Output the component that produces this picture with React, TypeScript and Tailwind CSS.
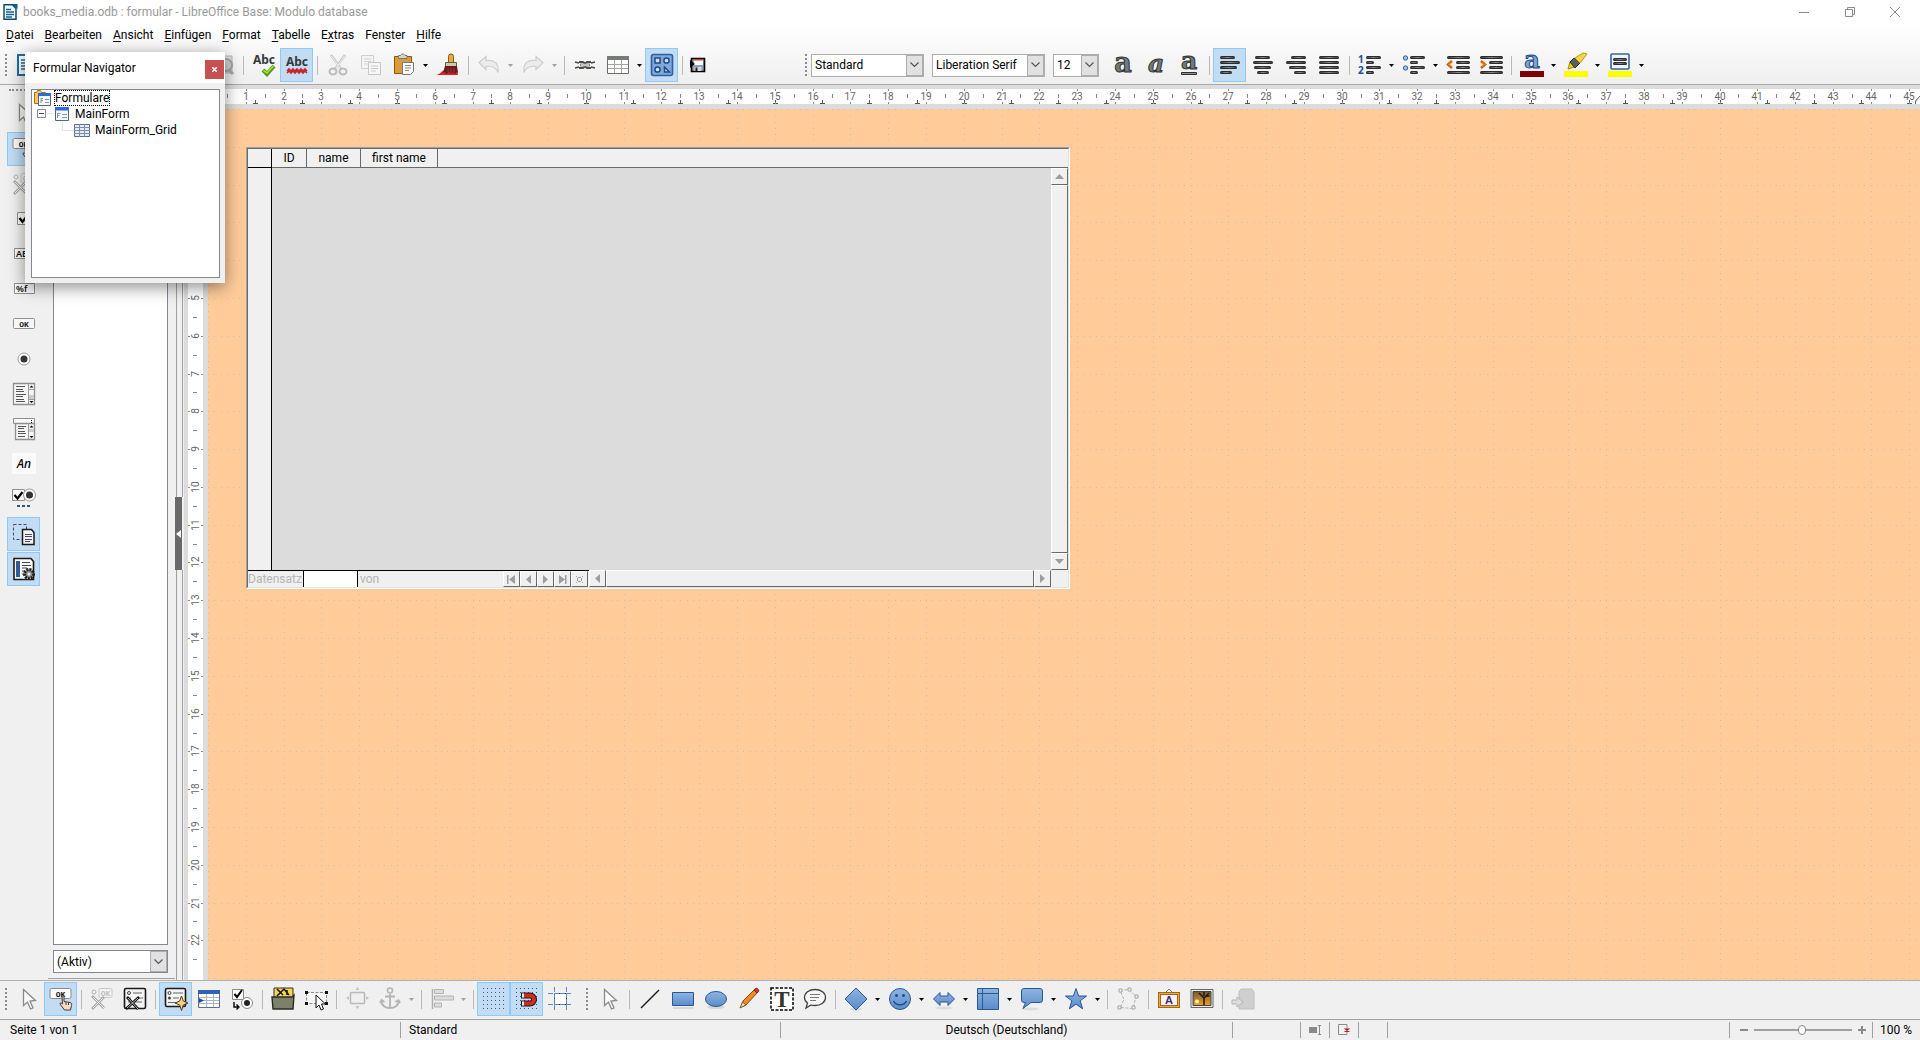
import React from "react";

const CM = 37.79;

type IconProps = { children: React.ReactNode };

const Svg: React.FC<IconProps> = ({ children }) => (
  <svg width="24" height="24" viewBox="0 0 24 24" fill="none" className="shrink-0 overflow-visible" aria-hidden="true">
    {children}
  </svg>
);

type ToolProps = {
  label: string;
  active?: boolean;
  menu?: boolean;
  dim?: boolean;
  children: React.ReactNode;
};

const Tool: React.FC<ToolProps> = ({ label, active, menu, dim, children }) => (
  <div className="flex shrink-0 items-center">
    <button
      type="button"
      aria-label={label}
      title={label}
      className={
        active
          ? "flex h-[34px] w-[33px] items-center justify-center border border-[#90c8f6] bg-[#c1dcf3]"
          : "flex h-[34px] w-[33px] items-center justify-center"
      }
    >
      {children}
    </button>
    {menu && (
      <button type="button" aria-label={label + " Menü"} className="flex h-[34px] w-[11px] items-center justify-center">
        <svg width="5" height="3" viewBox="0 0 5 3" aria-hidden="true">
          <path d="M0 0h5L2.5 3z" fill={dim ? "#a0a0a0" : "#000"} />
        </svg>
      </button>
    )}
  </div>
);

const Sep = () => (
  <div className="flex h-[34px] w-2 shrink-0 items-center justify-center">
    <div className="h-[19px] w-px bg-[#b9b9b9]" />
  </div>
);

const Grip = () => (
  <div className="flex h-[34px] w-[11px] shrink-0 items-center justify-center">
    <div className="h-[22px] border-l-2 border-dotted border-[#8c8c8c]" />
  </div>
);

/* ---------- icons ---------- */

const Gradients = () => (
  <svg width="0" height="0" className="absolute" aria-hidden="true">
    <defs>
      <linearGradient id="blue" x1="0" y1="0" x2="0" y2="1">
        <stop offset="0" stopColor="#8fb4e0" />
        <stop offset="1" stopColor="#5a8ccb" />
      </linearGradient>
      <linearGradient id="bar" x1="0" y1="0" x2="1" y2="0">
        <stop offset="0" stopColor="#3a3a3a" />
        <stop offset="0.5" stopColor="#8a8a8a" />
        <stop offset="1" stopColor="#3a3a3a" />
      </linearGradient>
      <linearGradient id="sunset" x1="0" y1="0" x2="0" y2="1">
        <stop offset="0" stopColor="#6b5a3c" />
        <stop offset="1" stopColor="#f0a020" />
      </linearGradient>
    </defs>
  </svg>
);

const DocIcon = () => (
  <svg width="16" height="16" viewBox="0 0 16 16" aria-hidden="true">
    <path d="M2 .8h8.5L14 4.5v10.7H2z" fill="#f4fafd" stroke="#0c4a6b" strokeWidth="1.5" />
    <path d="M10 0h5.5v5z" fill="#0c5f8c" />
    <path d="M4 5.5h5M4 8h8M4 10.5h8M4 13h6" stroke="#17658f" strokeWidth="1.3" />
  </svg>
);

const NewDocIcon = () => (
  <Svg>
    <path d="M2 2h14l4 4v16H2z" fill="#fff" stroke="#1d6fa5" strokeWidth="2" />
    <path d="M5 7h10M5 10h12M5 13h12M5 16h12" stroke="#1d6fa5" strokeWidth="1.5" />
  </Svg>
);

const PreviewIcon = () => (
  <Svg>
    <path d="M3 3h18v17H3z" fill="#e2e2e2" stroke="#b8b8b8" />
    <circle cx="15" cy="12" r="6" fill="#d2d2d2" stroke="#a6a6a6" strokeWidth="2" />
    <path d="M18 17l4 4" stroke="#a6a6a6" strokeWidth="3" />
  </Svg>
);

const SpellIcon = ({ auto }: { auto?: boolean }) => (
  <Svg>
    <text x="12" y={auto ? 13 : 11} textAnchor="middle" fontSize="12" fontWeight="700" fontFamily="Noto Sans, sans-serif" fill="#333a3f">
      Abc
    </text>
    {auto ? (
      <path d="M2 18l2-2 2 2 2-2 2 2 2-2 2 2 2-2 2 2 2-2 2 2M2 20l2-2 2 2 2-2 2 2 2-2 2 2 2-2 2 2 2-2 2 2" stroke="#c8252c" strokeWidth="1.6" />
    ) : (
      <path d="M11 17l4 4 7-8" stroke="#4e9a06" strokeWidth="4" />
    )}
    {!auto && <path d="M11.5 17.500l3.500 2.500 6.500-7" stroke="#9be24a" strokeWidth="1.6" />}
  </Svg>
);

const CutIcon = () => (
  <Svg>
    <path d="M5 2l10 14M19 2L9 16" stroke="#c9c9c9" strokeWidth="2.6" />
    <path d="M5.5 3l9 13M18.5 3l-9 13" stroke="#f1f1f1" />
    <ellipse cx="7" cy="18.5" rx="3.5" ry="3" stroke="#bdbdbd" strokeWidth="2" />
    <ellipse cx="17" cy="18.5" rx="3.5" ry="3" stroke="#bdbdbd" strokeWidth="2" />
  </Svg>
);

const CopyIcon = () => (
  <Svg>
    <path d="M2.5 2.5h12v13h-12z" fill="#f4f4f4" stroke="#cfcfcf" />
    <path d="M5 6h7M5 8.500h7M5 11h4" stroke="#d2d2d2" />
    <path d="M9.5 9.5h12v12h-12z" fill="#f6f6f6" stroke="#c6c6c6" />
    <path d="M12 13h7M12 15.500h7M12 18h5" stroke="#cacaca" />
  </Svg>
);

const PasteIcon = () => (
  <Svg>
    <path d="M2.5 3.500h17v17h-17z" fill="#d99b3f" stroke="#8f5902" />
    <path d="M6.5 5.500v-3h2c.5-2 4-2 4.5 0h2v3z" fill="#d3d7cf" stroke="#777" />
    <path d="M10.5 9.500h11v9l-3 3h-8z" fill="#fafafa" stroke="#777" />
    <path d="M13 12.500h6M13 15h6M13 17.500h4" stroke="#888" />
  </Svg>
);

const BrushIcon = () => (
  <Svg>
    <path d="M0 22c5-1 5-4 9-5h12l1 5z" fill="#d8232f" />
    <path d="M12.5 11V3.500a2.500 2.500 0 015 0V11z" fill="#e9a94b" stroke="#8f5902" />
    <path d="M9.500 9.500h11v4h-11z" fill="#d3c9a8" stroke="#6b5a32" />
    <path d="M9 13h12l1 7-2-1-1 2-2-2-2 2-2-2-3 2-1-2-2 1z" fill="#5a1f22" />
    <path d="M12 15v4M15 15v5M18 15v4" stroke="#d8232f" />
  </Svg>
);

const UndoIcon = ({ flip }: { flip?: boolean }) => (
  <svg width="24" height="24" viewBox="0 0 24 24" fill="none" className={flip ? "-scale-x-100" : ""} aria-hidden="true">
    <path d="M2 9.500l7-6v4c8-1 13 2 12 12-2-5-6-7-12-6v3z" fill="#ececec" stroke="#cdcdcd" strokeWidth="1.2" />
  </svg>
);

const LinkIcon = () => (
  <Svg>
    <path d="M2 9l4 1M2 15l4-1M22 9l-4 1M22 15l-4-1M6 9h4l2 1.500L14 9h4M6 15h4l2-1.500 2 1.500h4" stroke="#4a4d4a" strokeWidth="1.800" />
    <path d="M7 12h10" stroke="#888a85" strokeWidth="3" />
    <path d="M8 12h8" stroke="#fff" />
  </Svg>
);

const TableIcon = () => (
  <Svg>
    <path d="M1.5 3.500h21v17h-21z" fill="#fff" stroke="#6a6d68" />
    <path d="M1 3h22v4H1z" fill="#777a75" />
    <path d="M2 11.500h20M2 15.500h20M8.500 7v13M15.500 7v13" stroke="#a3a5a0" />
  </Svg>
);

const ShapesIcon = () => (
  <Svg>
    <rect x="1.500" y="1.500" width="21" height="21" rx="2" fill="#7fa9dc" stroke="#2f5f9e" strokeWidth="1.600" />
    <path d="M5 5h5v5H5zM14.500 14v5h5z" stroke="#1f4a84" strokeWidth="1.500" fill="#cfe1f5" />
    <circle cx="16.500" cy="7.500" r="2.600" stroke="#1f4a84" strokeWidth="1.500" fill="#cfe1f5" />
    <circle cx="7.500" cy="16.500" r="2.600" stroke="#1f4a84" strokeWidth="1.500" fill="#cfe1f5" />
  </Svg>
);

const FloppyIcon = () => (
  <svg width="16" height="16" viewBox="0 0 16 16" className="shrink-0" aria-hidden="true">
    <path d="M1.5 1.500h13v13h-13z" fill="#8da3ba" stroke="#000" strokeWidth="1.600" />
    <path d="M4 2h9v6H4z" fill="#fff" />
    <path d="M4 2h9v1.500H4z" fill="#d93a2b" />
    <path d="M0 3l5 4-5 4z" fill="#000" />
    <path d="M4.5 10h7v4h-7z" fill="#d8d8d8" />
    <path d="M5.5 10.500h2V14h-2z" fill="#222" />
  </svg>
);

const LetterIcon = ({ kind }: { kind: "b" | "i" | "u" }) => (
  <Svg>
    <text
      x="12"
      y={kind === "u" ? 16 : 19}
      textAnchor="middle"
      fontSize={kind === "b" ? 27 : 25}
      fontWeight="700"
      fontStyle={kind === "i" ? "italic" : "normal"}
      fontFamily="DejaVu Serif, serif"
      fill="#747a78"
      stroke="#2e3436"
      strokeWidth="1"
    >
      a
    </text>
    {kind === "u" && <path d="M4.5 19.500h15v2h-15z" fill="#8a8f8d" stroke="#2e3436" />}
  </Svg>
);

const Bar = ({ x, y, w }: { x: number; y: number; w: number }) => (
  <g>
    <rect x={x} y={y} width={w} height="3" rx="1.500" fill="#2c2c2c" />
    <rect x={x + 1} y={y + 1} width={w - 2} height="1" fill="url(#bar)" />
  </g>
);

const AlignIcon = ({ kind }: { kind: "l" | "c" | "r" | "j" }) => {
  const widths = kind === "j" ? [20, 20, 20, 20] : [15, 20, 17, 12];
  return (
    <Svg>
      {widths.map((w, i) => (
        <Bar key={i} x={kind === "r" ? 22 - w : kind === "c" ? 12 - Math.round(w / 2) : 2} y={3 + i * 5} w={w} />
      ))}
    </Svg>
  );
};

const ListIcon = ({ numbered }: { numbered?: boolean }) => (
  <Svg>
    {[15, 8, 15, 8].map((w, i) => (
      <Bar key={i} x={8} y={3 + i * 5} w={w} />
    ))}
    {numbered ? (
      <g fontSize="10" fontWeight="700" fontFamily="Noto Sans, sans-serif" fill="#1f4f95">
        <text x="0" y="10">1</text>
        <text x="0" y="21">2</text>
      </g>
    ) : (
      <g fill="#9dbfe8" stroke="#3465a4">
        <circle cx="3.500" cy="5" r="2.200" />
        <circle cx="3.500" cy="15" r="2.200" />
      </g>
    )}
  </Svg>
);

const IndentIcon = ({ out }: { out?: boolean }) => (
  <Svg>
    <Bar x={1} y={3} w={23} />
    <Bar x={10} y={8} w={14} />
    <Bar x={10} y={13} w={14} />
    <Bar x={1} y={18} w={23} />
    <path d={out ? "M6 8l-4 3.500L6 15" : "M2 8l4 3.500L2 15"} stroke="#ce5c00" strokeWidth="2.500" />
    <path d={out ? "M5 9.500l-2 2 2 2" : "M3 9.500l2 2-2 2"} stroke="#fcaf3e" />
  </Svg>
);

const FontColorIcon = () => (
  <Svg>
    <text x="12" y="15" textAnchor="middle" fontSize="24" fontWeight="700" fontFamily="DejaVu Serif, serif" fill="#7ea6d8" stroke="#204a87" strokeWidth="1">
      a
    </text>
    <path d="M0 18h24v6H0z" fill="#800000" />
  </Svg>
);

const MarkerIcon = () => (
  <Svg>
    <path d="M4 16l2-7 5 5z" fill="#edd400" stroke="#a08a00" />
    <path d="M6 9l4-4 6 5-5 5z" fill="#5c5f5c" stroke="#2e3436" />
    <path d="M11 5l8-5 4 1-7 9z" fill="#f4d648" stroke="#b59b10" />
    <path d="M0 18h24v6H0z" fill="#ffff00" />
  </Svg>
);

const ParaColorIcon = () => (
  <Svg>
    <rect x="3" y="1" width="18" height="15" rx="1" fill="#eef4fc" stroke="#3465a4" strokeWidth="1.600" />
    <Bar x={5} y={5} w={14} />
    <Bar x={5} y={9} w={14} />
    <path d="M0 18h24v6H0z" fill="#ffff00" />
  </Svg>
);

const CursorIcon = () => (
  <Svg>
    <path d="M7.5 2.500v16l4-3.500 3 7 2.500-1-3-7 5.500-.5z" fill="#fbfbfb" stroke="#8a8a8a" strokeWidth="1.300" />
  </Svg>
);

const DesignIcon = () => (
  <Svg>
    <rect x="1" y="1.500" width="21" height="10" rx="1.500" fill="#fafafa" stroke="#8a8a8a" />
    <text x="11.500" y="9.500" textAnchor="middle" fontSize="8" fontWeight="700" fontFamily="Liberation Mono, monospace" fill="#111">
      OK
    </text>
    <path d="M13 9.500c1-.8 2 0 2 1v4l6 1c1.500.5 2 1 1.500 3l-1 4.500h-6l-4.500-6c0-1.500 1-1.500 2.500 0z" fill="#f3dcc6" stroke="#4a3a2e" />
    <path d="M17 15v3M19.500 15.500V18" stroke="#4a3a2e" />
  </Svg>
);

const ControlToolsIcon = () => (
  <Svg>
    <circle cx="4" cy="5" r="2" stroke="#b4b4b4" />
    <rect x="9" y="1.500" width="13" height="9" rx="1.500" stroke="#c8c8c8" fill="#f2f2f2" />
    <text x="15.500" y="9" textAnchor="middle" fontSize="8" fontWeight="700" fontFamily="Liberation Mono, monospace" fill="#c0c0c0">
      OK
    </text>
    <path d="M2 9l12 12M14 10L2 22" stroke="#a8a8a8" strokeWidth="2.600" />
    <path d="M3 10l11 11M13 11L3 21" stroke="#ededed" />
  </Svg>
);

const FormToolsIcon = () => (
  <Svg>
    <rect x="1.500" y="1.500" width="21" height="20" rx="1.500" fill="#f4f4f4" stroke="#1a1a1a" strokeWidth="1.600" />
    <circle cx="6" cy="6" r="1.500" stroke="#444" />
    <path d="M10 6h9M4 11h4M15 11h5M5 15h14" stroke="#666" />
    <path d="M4 10l11 12M16 10L3 22" stroke="#111" strokeWidth="2.600" />
    <path d="M5 11l10 11M15 11L4 21" stroke="#b9b9b9" />
  </Svg>
);

const WizardIcon = () => (
  <Svg>
    <rect x="1.500" y="1.500" width="20" height="18" rx="1.500" fill="#f4f4f4" stroke="#1a1a1a" strokeWidth="1.600" />
    <circle cx="5.500" cy="6" r="1.500" stroke="#444" />
    <circle cx="5.500" cy="11" r="1.500" fill="#444" />
    <path d="M9 6h10M9 11h6M4 15.500h10" stroke="#666" />
    <path d="M17.500 9l1.800 5 4.700 2-4.700 2-1.800 5.500-1.800-5.500L11 16l4.700-2z" fill="#f6cf8a" stroke="#5a3d10" />
  </Svg>
);

const GridControlIcon = () => (
  <Svg>
    <path d="M1.5 3.500h21v17h-21z" fill="#fff" stroke="#5b6f8a" />
    <path d="M1 3h22v4H1z" fill="#2f62b4" />
    <path d="M2 10.500h20M2 13.500h20M2 16.500h20M9.500 7v13M16.500 7v13" stroke="#a8b6c8" />
    <path d="M2 11l5 2.500L2 16z" fill="#1c4fa0" />
  </Svg>
);

const SwapControlIcon = () => (
  <Svg>
    <path d="M2.500 2.500h11v10h-11z" fill="#fff" stroke="#8a8a8a" />
    <path d="M4.500 7l2.500 3 5-7" stroke="#000" strokeWidth="2" />
    <circle cx="17" cy="16" r="5.500" fill="#fff" stroke="#8a8a8a" />
    <circle cx="17" cy="16" r="3" fill="#222" />
    <path d="M4 15v5h4M6.500 17.500L9 20l-2.500 2.500" stroke="#000" strokeWidth="1.400" />
  </Svg>
);

const OpenDesignIcon = () => (
  <Svg>
    <path d="M3 1h19v14H3z" fill="#f2d35c" stroke="#3a3208" />
    <path d="M6 9l7-7 5 6M6 2l6 6M16 3v5" stroke="#111" strokeWidth="1.500" />
    <path d="M1 10h20l2-2-1 14H2z" fill="#7d806a" stroke="#2a2b22" strokeWidth="1.400" />
  </Svg>
);

const SelectIcon = () => (
  <Svg>
    <path d="M2.5 5.500h20v11h-20z" fill="#f5f5f5" stroke="#8a8a8a" strokeDasharray="3 1.500" />
    <path d="M1 4h3v3H1zM21 4h3v3h-3zM1 15h3v3H1zM21 15h3v3h-3z" fill="#111" />
    <path d="M12 8v13l3-3 2 5 2.500-1-2-5h4z" fill="#fff" stroke="#111" />
  </Svg>
);

const PositionIcon = () => (
  <Svg>
    <rect x="5.500" y="5.500" width="14" height="11" rx="1" stroke="#b9b9b9" strokeWidth="1.500" />
    <path d="M12.500 0l2 3h-4zM12.500 22l2-3h-4zM1 11l3-2v4zM24 11l-3-2v4z" fill="#c4c4c4" />
  </Svg>
);

const AnchorIcon = () => (
  <Svg>
    <circle cx="12" cy="3.500" r="2.500" stroke="#b4b4b4" strokeWidth="1.600" />
    <path d="M12 7v14M7 9.500h10M3 14c1 5 5 7 9 7s8-2 9-7M2 16l1.500-3 3 2M22 16l-1.500-3-3 2" stroke="#b4b4b4" strokeWidth="1.800" />
  </Svg>
);

const ArrangeIcon = () => (
  <Svg>
    <path d="M2.500 2v20" stroke="#b0b0b0" strokeWidth="1.500" />
    <path d="M4.500 2.500h9v4h-9zM4.500 9h19v4h-19zM4.500 16h7v4h-7z" fill="#dcdcdc" stroke="#b4b4b4" />
  </Svg>
);

const GridDotsIcon = ({ magnet }: { magnet?: boolean }) => (
  <Svg>
    {[0, 1, 2, 3, 4, 5].map((i) => (
      <path key={i} d={`M1 ${1.5 + i * 4}h23`} stroke="#3a5a80" strokeDasharray="1 3" />
    ))}
    {magnet && (
      <g>
        <path d="M6 8.500h9a4 4 0 010 8H6" stroke="#1a1a1a" strokeWidth="6" />
        <path d="M7 8.500h8a4 4 0 010 8H7" stroke="#d42a1e" strokeWidth="4" />
        <path d="M7 8.500h2M7 16.500h2" stroke="#eee" strokeWidth="4" />
      </g>
    )}
  </Svg>
);

const GuidesIcon = () => (
  <Svg>
    <path d="M6.500 6.500h12v11h-12z" fill="#fff" stroke="#333" />
    <path d="M6.500 0v24M18.500 0v24M0 6.500h24M0 17.500h24" stroke="#5f88b8" strokeDasharray="5 1" />
  </Svg>
);

const LineIcon = () => (
  <Svg>
    <path d="M3 21L21 3" stroke="#1a1a1a" strokeWidth="1.500" />
  </Svg>
);

const RectIcon = () => (
  <Svg>
    <path d="M2 20h21v2H2z" fill="#d8d8d8" />
    <path d="M1.500 5.500h21v13h-21z" fill="url(#blue)" stroke="#2a5795" />
  </Svg>
);

const EllipseIcon = () => (
  <Svg>
    <ellipse cx="12" cy="20" rx="9" ry="2" fill="#d8d8d8" />
    <ellipse cx="12" cy="12" rx="10.500" ry="7.500" fill="url(#blue)" stroke="#2a5795" />
  </Svg>
);

const PencilIcon = () => (
  <Svg>
    <path d="M4 20l2-6L17 3l3 3L9 18z" fill="#f08a24" stroke="#8a4a0a" />
    <path d="M17 3l1.500-1.500c1.500-1 4 1.500 3 3L20 6z" fill="#d9362b" stroke="#8a1c14" />
    <path d="M3 21l2.500-6L9 18z" fill="#f6dcb4" stroke="#7a5a2a" />
  </Svg>
);

const TextIcon = () => (
  <Svg>
    <path d="M1 1h22v22H1z" fill="#fff" stroke="#000" strokeWidth="1.500" strokeDasharray="3 1.500" />
    <text x="12" y="20" textAnchor="middle" fontSize="23" fontWeight="700" fontFamily="Liberation Serif, serif" fill="#333">
      T
    </text>
  </Svg>
);

const SpeechIcon = () => (
  <Svg>
    <path d="M12 2.500c6 0 10.500 3.500 10.500 8s-4.500 8-10.500 8c-1.500 0-3 0-4-.5L3 21l1.500-5C2.500 14.500 1.500 12.500 1.500 10.500c0-4.500 4.500-8 10.500-8z" fill="#f6f6f6" stroke="#444" strokeWidth="1.300" />
    <path d="M7 7.500h10M7 10.500h9M7 13.500h6" stroke="#777" />
  </Svg>
);

const DiamondIcon = () => (
  <Svg>
    <ellipse cx="12" cy="22" rx="6" ry="1.500" fill="#dcdcdc" />
    <path d="M12 1l11 11-11 11L1 12z" fill="url(#blue)" stroke="#2a5795" />
  </Svg>
);

const SmileyIcon = () => (
  <Svg>
    <circle cx="12" cy="12" r="10.500" fill="url(#blue)" stroke="#2a5795" />
    <circle cx="8.500" cy="8.500" r="1.500" fill="#1f4a84" />
    <circle cx="15.500" cy="8.500" r="1.500" fill="#1f4a84" />
    <path d="M5.500 14c2.500 5 10.500 5 13 0" stroke="#1f4a84" strokeWidth="1.500" />
  </Svg>
);

const ArrowsIcon = () => (
  <Svg>
    <ellipse cx="12" cy="21" rx="9" ry="1.500" fill="#dcdcdc" />
    <path d="M1.500 12L8 5.500V9h8V5.500l6.500 6.500-6.500 6.500V15H8v3.500z" fill="url(#blue)" stroke="#2a5795" />
  </Svg>
);

const FlowIcon = () => (
  <Svg>
    <path d="M1.500 1.500h21v21h-21z" fill="url(#blue)" stroke="#2a5795" />
    <path d="M6.500 2v20M2 6.500h20" stroke="#2a5795" />
  </Svg>
);

const CalloutIcon = () => (
  <Svg>
    <ellipse cx="10" cy="22" rx="9" ry="1.500" fill="#dcdcdc" />
    <path d="M4 1.500h16q2.500 0 2.500 2.500v9q0 2.500-2.500 2.500h-9L3 21.500l2.500-6H4Q1.500 15.500 1.500 13V4Q1.500 1.500 4 1.500z" fill="url(#blue)" stroke="#2a5795" />
  </Svg>
);

const StarIcon = () => (
  <Svg>
    <path d="M12 1.500l2.600 7.500h8l-6.400 4.800 2.400 8L12 17.200 5.400 21.800l2.400-8L1.400 9h8z" fill="url(#blue)" stroke="#2a5795" />
  </Svg>
);

const PointsIcon = () => (
  <Svg>
    <path d="M4 3.500l9-1 7 7-3 12-13-1 4-8z" stroke="#b4b4b4" strokeDasharray="3 1.500" />
    <path d="M3 2h3v3H3zM12 1h3v3h-3zM19 8h3v3h-3zM16 19h3v3h-3zM2 19h3v3H2z" fill="#f4f4f4" stroke="#a4a4a4" />
  </Svg>
);

const FontworkIcon = () => (
  <Svg>
    <path d="M8 6l4-4 4 4" stroke="#777" />
    <path d="M2.500 6.500h19v13h-19z" fill="#f8f4ff" stroke="#a8670c" strokeWidth="3" />
    <path d="M2.500 6.500h19v13h-19z" stroke="#e8ab4a" />
    <text x="12" y="17" textAnchor="middle" fontSize="11" fontWeight="700" fontFamily="Liberation Sans, sans-serif" fill="#4a2a6a">
      A
    </text>
  </Svg>
);

const PictureIcon = () => (
  <Svg>
    <path d="M1 2.500h22v18H1z" fill="#eee" stroke="#666" />
    <path d="M3 4.500h18v14H3z" fill="url(#sunset)" stroke="#444" />
    <circle cx="7" cy="14.500" r="2" fill="#fff3b0" />
    <path d="M14 18v-7l-5-5M14 11l5-5M14 9V5M16.500 9h3" stroke="#22160a" strokeWidth="1.500" />
  </Svg>
);

const ExtrudeIcon = () => (
  <Svg>
    <path d="M8 5l2-3h11l2 3v17H8z" fill="#cfcfcf" stroke="#c0c0c0" />
    <path d="M1 13h5v-3l6 5-6 5v-3H1z" fill="#dedede" stroke="#b4b4b4" />
  </Svg>
);

const PushButtonIcon = () => (
  <Svg>
    <rect x="1.500" y="6.500" width="21" height="10" rx="1" fill="#f8f8f8" stroke="#8f8f8f" />
    <text x="12" y="14.500" textAnchor="middle" fontSize="8" fontWeight="700" fontFamily="Liberation Mono, monospace" fill="#222">
      OK
    </text>
  </Svg>
);

const CheckIcon = () => (
  <Svg>
    <path d="M5.500 5.500h13v12h-13z" fill="#fafafa" stroke="#8f8f8f" />
    <path d="M7.500 11l3 4 6-8" stroke="#000" strokeWidth="2.200" />
  </Svg>
);

const FieldIcon = ({ text }: { text: string }) => (
  <Svg>
    <path d="M2.500 6.500h20v10h-20z" fill="#fafafa" stroke="#8f8f8f" />
    <text x="4" y="15" fontSize="9" fontWeight="600" fontFamily="Noto Sans, sans-serif" fill="#111">
      {text}
    </text>
  </Svg>
);

const RadioIcon = () => (
  <Svg>
    <circle cx="12" cy="12" r="6" fill="#fcfcfc" stroke="#9a9a9a" />
    <circle cx="12" cy="12" r="3.500" fill="#333" />
  </Svg>
);

const ListBoxIcon = () => (
  <Svg>
    <path d="M1.500 1.500h21v21h-21z" fill="#f6f6f6" stroke="#8f8f8f" strokeWidth="1.300" />
    <path d="M16.500 2v20M17 7.500h5M17 17.500h5" stroke="#9a9a9a" />
    <path d="M17 13h5v4h-5z" fill="#ccc" />
    <path d="M17.500 5.500l2-2 2 2zM17.500 19l2 2 2-2z" fill="#000" />
    <path d="M4 4.500h9M4 7.500h7M4 9.500h8M4 12.500h10M4 14.500h7M4 17.500h8M4 19.500h9" stroke="#555" />
  </Svg>
);

const ComboIcon = () => (
  <Svg>
    <path d="M1.500 1.500h21v5h-21z" fill="#fafafa" stroke="#8f8f8f" />
    <path d="M3.500 6.500h19v16h-19z" fill="#f6f6f6" stroke="#8f8f8f" strokeWidth="1.300" />
    <path d="M16.500 7v15" stroke="#9a9a9a" />
    <path d="M17.500 10.500l2-2 2 2zM17.500 19l2 2 2-2zM19 3h1v1h-1zM19 5h1v1h-1z" fill="#000" />
    <path d="M17 12h5v3h-5z" fill="#ccc" />
    <path d="M6 9.500h8M6 11.500h6M6 14.500h7M6 16.500h8M6 19.500h7" stroke="#555" />
  </Svg>
);

const LabelIcon = () => (
  <Svg>
    <path d="M0 1h24v21H0z" fill="#fafafa" />
    <text x="12" y="16" textAnchor="middle" fontSize="12" fontStyle="italic" fontWeight="500" fontFamily="Noto Sans, sans-serif" fill="#000">
      An
    </text>
  </Svg>
);

const MoreIcon = () => (
  <Svg>
    <path d="M.5 2.500h12v11H.5z" fill="#fafafa" stroke="#8f8f8f" />
    <path d="M2.500 8l3 3.500L10.500 5" stroke="#000" strokeWidth="2.200" />
    <circle cx="17.500" cy="8" r="6" fill="#fcfcfc" stroke="#9a9a9a" />
    <circle cx="17.500" cy="8" r="3.500" fill="#333" />
    <path d="M5 18h3v2H5zM10 18h3v2h-3zM15 18h3v2h-3z" fill="#2f5878" />
  </Svg>
);

const PageFormIcon = () => (
  <Svg>
    <path d="M1.500 2.500h13v15h-13z" stroke="#4a4470" strokeDasharray="3 2" />
    <path d="M10.500 7.500h9l2.500 3v12H10.500z" fill="#f4f4f4" stroke="#1a1a1a" strokeWidth="1.500" />
    <path d="M13 12.500h7M13 14.500h7M13 17.500h7M13 19.500h5" stroke="#4a4470" />
  </Svg>
);

const FormPropsIcon = () => (
  <Svg>
    <path d="M2 1.500h17l2.500 3v18H2z" fill="#fafafa" stroke="#1a1a1a" strokeWidth="1.600" />
    <path d="M4 4h4v16H4z" fill="#2d5c96" />
    <path d="M10 5.500h8M10 8.500h9M10 11h5M10 14h3M10 17h3" stroke="#444" />
    <circle cx="17" cy="17" r="4.500" fill="#8d8d8d" stroke="#222" strokeWidth="3" strokeDasharray="2 1" />
    <circle cx="17" cy="17" r="1.500" fill="#eee" />
  </Svg>
);

/* ---------- parts ---------- */

const TitleBar = () => (
  <header className="flex h-6 items-center bg-white pl-[2px] text-[#999]">
    <DocIcon />
    <h1 className="ml-[5px] flex-1">books_media.odb : formular - LibreOffice Base: Modulo database</h1>
    <button type="button" aria-label="Minimieren" className="flex w-[46px] justify-center">
      <svg width="10" height="10" viewBox="0 0 10 10" aria-hidden="true">
        <path d="M0 5.500h10" stroke="#8a8a8a" />
      </svg>
    </button>
    <button type="button" aria-label="Wiederherstellen" className="flex w-[45px] justify-center">
      <svg width="10" height="10" viewBox="0 0 10 10" fill="none" aria-hidden="true">
        <path d="M.5 2.500h7v7h-7zM2.500 2V.5h7v7H8" stroke="#8a8a8a" />
      </svg>
    </button>
    <button type="button" aria-label="Schließen" className="mr-[2px] flex w-[46px] justify-center">
      <svg width="10" height="10" viewBox="0 0 10 10" aria-hidden="true">
        <path d="M0 0l10 10M10 0L0 10" stroke="#8a8a8a" />
      </svg>
    </button>
  </header>
);

const menus = [
  ["", "D", "atei"],
  ["", "B", "earbeiten"],
  ["", "A", "nsicht"],
  ["", "E", "infügen"],
  ["", "F", "ormat"],
  ["", "T", "abelle"],
  ["E", "x", "tras"],
  ["Fen", "s", "ter"],
  ["", "H", "ilfe"],
];

const MenuBar = () => (
  <nav className="flex h-[22px] items-center gap-[11px] pl-[6px]">
    {menus.map(([before, key, after]) => (
      <button type="button" key={key + after}>
        {before}
        <u className="underline-offset-2">{key}</u>
        {after}
      </button>
    ))}
  </nav>
);

type ComboProps = { label: string; value: string; className: string };

const Combo: React.FC<ComboProps> = ({ label, value, className }) => (
  <div className={"flex h-[23px] shrink-0 border bg-white " + className}>
    <select aria-label={label} className="min-w-0 flex-1 appearance-none pl-[3px] outline-none">
      <option>{value}</option>
    </select>
    <span className="pointer-events-none flex w-[17px] items-center justify-center border border-[#adadad] bg-[#e1e1e1]">
      <svg width="9" height="6" viewBox="0 0 9 6" fill="none" aria-hidden="true">
        <path d="M.5 .5l4 4 4-4" stroke="#555" strokeWidth="1.200" />
      </svg>
    </span>
  </div>
);

const MainToolbar = () => (
  <div className="flex h-[38px] items-center overflow-hidden" role="toolbar">
    <Grip />
    <Tool label="Neu" menu><NewDocIcon /></Tool>
    <Tool label="Öffnen" menu><OpenDesignIcon /></Tool>
    <Tool label="Speichern"><FloppyIcon /></Tool>
    <Sep />
    <Tool label="Datei bearbeiten"><PencilIcon /></Tool>
    <Tool label="Drucken"><NewDocIcon /></Tool>
    <Tool label="Seitenansicht"><PreviewIcon /></Tool>
    <Sep />
    <Tool label="Rechtschreibung"><SpellIcon /></Tool>
    <Tool label="Automatische Rechtschreibprüfung" active><SpellIcon auto /></Tool>
    <Sep />
    <Tool label="Ausschneiden"><CutIcon /></Tool>
    <Tool label="Kopieren"><CopyIcon /></Tool>
    <Tool label="Einfügen" menu><PasteIcon /></Tool>
    <Tool label="Format übertragen"><BrushIcon /></Tool>
    <Sep />
    <Tool label="Rückgängig" menu dim><UndoIcon /></Tool>
    <Tool label="Wiederherstellen" menu dim><UndoIcon flip /></Tool>
    <Sep />
    <Tool label="Hyperlink"><LinkIcon /></Tool>
    <Tool label="Tabelle" menu><TableIcon /></Tool>
    <Tool label="Zeichenfunktionen" active><ShapesIcon /></Tool>
    <Sep />
    <button type="button" aria-label="Formular speichern" className="flex h-[34px] w-6 shrink-0 items-center justify-center">
      <FloppyIcon />
    </button>
    <div className="w-[90px] shrink-0" />
    <Grip />
    <div className="mr-[7px] flex shrink-0 gap-2">
      <Combo label="Absatzvorlage" value="Standard" className="w-[113px] border-[#abadb3]" />
      <Combo label="Schriftname" value="Liberation Serif" className="w-[113px] border-[#abadb3]" />
      <Combo label="Schriftgröße" value="12" className="w-[46px] border-[#abadb3]" />
    </div>
    <Tool label="Fett"><LetterIcon kind="b" /></Tool>
    <Tool label="Kursiv"><LetterIcon kind="i" /></Tool>
    <Tool label="Unterstrichen"><LetterIcon kind="u" /></Tool>
    <Sep />
    <Tool label="Linksbündig" active><AlignIcon kind="l" /></Tool>
    <Tool label="Zentriert"><AlignIcon kind="c" /></Tool>
    <Tool label="Rechtsbündig"><AlignIcon kind="r" /></Tool>
    <Tool label="Blocksatz"><AlignIcon kind="j" /></Tool>
    <Sep />
    <Tool label="Nummerierung" menu><ListIcon numbered /></Tool>
    <Tool label="Aufzählung" menu><ListIcon /></Tool>
    <Tool label="Einzug verkleinern"><IndentIcon out /></Tool>
    <Tool label="Einzug vergrößern"><IndentIcon /></Tool>
    <Sep />
    <Tool label="Schriftfarbe" menu><FontColorIcon /></Tool>
    <Tool label="Hervorheben" menu><MarkerIcon /></Tool>
    <Tool label="Hintergrundfarbe" menu><ParaColorIcon /></Tool>
  </div>
);

const ControlBar = () => (
  <div className="flex w-12 shrink-0 flex-col gap-px pl-[7px]" role="toolbar">
    <div className="h-[11px] pt-1">
      <div className="ml-[2px] w-7 border-t-2 border-dotted border-[#8c8c8c]" />
    </div>
    <Tool label="Auswahl"><CursorIcon /></Tool>
    <Tool label="Entwurfsmodus" active><DesignIcon /></Tool>
    <Tool label="Kontrollfeld"><ControlToolsIcon /></Tool>
    <Tool label="Markierfeld"><CheckIcon /></Tool>
    <Tool label="Textfeld"><FieldIcon text="AB" /></Tool>
    <Tool label="Formatiertes Feld"><FieldIcon text="%f" /></Tool>
    <Tool label="Schaltfläche"><PushButtonIcon /></Tool>
    <Tool label="Optionsfeld"><RadioIcon /></Tool>
    <Tool label="Listenfeld"><ListBoxIcon /></Tool>
    <Tool label="Kombinationsfeld"><ComboIcon /></Tool>
    <Tool label="Beschriftungsfeld"><LabelIcon /></Tool>
    <Tool label="Weitere Steuerelemente"><MoreIcon /></Tool>
    <Tool label="Formular-Entwurf" active><PageFormIcon /></Tool>
    <Tool label="Formular" active><FormPropsIcon /></Tool>
  </div>
);

const StylesPanel = () => (
  <aside className="mb-px flex w-[127px] shrink-0 flex-col border-b border-[#a0a0a0] pb-[5px] pl-[5px] pr-[7px]">
    <div className="flex-1 border border-[#828790] bg-white" />
    <div className="mt-[5px]">
      <Combo label="Vorlagenfilter" value="(Aktiv)" className="w-full border-[#828790]" />
    </div>
  </aside>
);

const Splitter = () => (
  <div className="flex w-[9px] shrink-0 flex-col">
    <div className="ml-px w-[7px] flex-1 border-x border-[#a0a0a0]" />
    <button type="button" aria-label="Seitenleiste ausblenden" className="flex h-[73px] w-[7px] items-center justify-center bg-[#696969]">
      <svg width="5" height="8" viewBox="0 0 5 8" aria-hidden="true">
        <path d="M5 0v8L0 4z" fill="#fff" />
      </svg>
    </button>
    <div className="ml-px h-[410px] w-[7px] border-x border-[#a0a0a0]" />
  </div>
);

const range = (count: number) => Array.from({ length: Math.max(0, count) }, (_, i) => i);

const HorizontalRuler = () => {
  const marks = range(Math.floor((window.innerWidth - 208) / CM) + 1);
  return (
    <div className="flex h-6 items-start bg-[#dcdcdc] pt-1">
      <svg className="ml-6 h-[15px] min-w-0 flex-1 bg-white" fontSize="10" fill="#666" aria-hidden="true">
        {marks.map((n) => {
          const x = Math.round(n * CM);
          const half = Math.round((n + 0.5) * CM);
          const tab = Math.round(n * 1.25 * CM);
          return (
            <g key={n}>
              <path d={`M${x} 0h1v2h-1zM${x} 13h1v2h-1zM${half} 5h1v4h-1z`} fill="#8a8a8a" />
              {n > 0 && <path d={`M${tab} 11h1v3h2v1h-5v-1h2z`} fill="#555" />}
              {n > 0 && (
                <text x={x} y="11" textAnchor="middle">
                  {n}
                </text>
              )}
            </g>
          );
        })}
        <svg x="100%" overflow="visible">
          <path d="M-4.500 15v-3L0 7" fill="#dcdcdc" stroke="#666" />
        </svg>
      </svg>
    </div>
  );
};

const VerticalRuler = () => {
  const marks = range(Math.floor((window.innerHeight - 169) / CM));
  return (
    <div className="flex w-6 shrink-0 bg-[#dcdcdc] pl-1">
      <svg className="h-full w-[15px] bg-white" fontSize="10" fill="#666" aria-hidden="true">
        {marks.map((n) => {
          const y = Math.round(n * CM);
          const half = Math.round((n + 0.5) * CM);
          return (
            <g key={n}>
              <path d={`M0 ${y}h2v1h-2zM13 ${y}h2v1h-2zM5 ${half}h4v1h-4z`} fill="#8a8a8a" />
              {n > 0 && (
                <text transform={`translate(11 ${y}) rotate(-90)`} textAnchor="middle">
                  {n}
                </text>
              )}
            </g>
          );
        })}
      </svg>
    </div>
  );
};

// one dotted line per centimetre in both directions, six dots per centimetre
const gridPath = () => {
  const parts: string[] = [];
  const cols = 70;
  const rows = 40;
  for (let c = 0; c <= cols; c++) {
    for (let d = 0; d < rows * 6; d++) {
      parts.push(`M${Math.round(c * CM)} ${Math.round((d * CM) / 6)}h1v1h-1z`);
    }
  }
  for (let r = 0; r <= rows; r++) {
    for (let d = 0; d < cols * 6; d++) {
      if (d % 6 !== 0) parts.push(`M${Math.round((d * CM) / 6)} ${Math.round(r * CM)}h1v1h-1z`);
    }
  }
  return parts.join("");
};

const gridDots = gridPath();

const raised = "flex items-center justify-center border border-b-[#696969] border-l-white border-r-[#696969] border-t-white bg-[#f0f0f0]";

const Arrow = ({ d }: { d: string }) => (
  <svg width="9" height="9" viewBox="0 0 9 9" className="shrink-0" aria-hidden="true">
    <path d={d} fill="#9d9d9d" />
  </svg>
);

const recordButtons = [
  { label: "Erster Datensatz", d: "M0 0h1.500v9H0zM8 0v9L2 4.500z" },
  { label: "Vorheriger Datensatz", d: "M7 0v9L2 4.500z" },
  { label: "Nächster Datensatz", d: "M2 0v9l5-4.500z" },
  { label: "Letzter Datensatz", d: "M1 0v9l6-4.500zM7 0h1.500v9H7z" },
  { label: "Neuer Datensatz", d: "M1 1h1v1H1zM7 1h1v1H7zM1 7h1v1H1zM7 7h1v1H7zM3 2h3v1H3zM3 6h3v1H3zM2 3h1v3H2zM6 3h1v3H6z" },
];

const columns = [
  { name: "ID", className: "w-[35px] border-b border-r border-[#696969] p-0 font-normal" },
  { name: "name", className: "w-[54px] border-b border-r border-[#696969] p-0 font-normal" },
  { name: "first name", className: "w-[77px] border-b border-r border-[#696969] p-0 font-normal" },
];

const GridControl = () => (
  <div className="w-[824px] border border-b-white border-l-[#a0a0a0] border-r-white border-t-[#a0a0a0]">
    <div className="border border-b-[#e3e3e3] border-l-[#696969] border-r-[#e3e3e3] border-t-[#696969] bg-[#f0f0f0]">
      <table className="w-full table-fixed border-separate border-spacing-0">
        <thead>
          <tr className="h-[19px]">
            <th className="w-6 border-b border-r border-black p-0" aria-label="Zeile" />
            {columns.map((c) => (
              <th key={c.name} className={c.className}>
                {c.name}
              </th>
            ))}
            <th className="border-b border-[#696969] p-0" aria-label="leer" />
          </tr>
        </thead>
        <tbody>
          <tr>
            <td className="border-r border-black p-0" />
            <td colSpan={4} className="bg-[#dcdcdc] p-0">
              <div className="flex h-[402px] justify-end">
                <div className="flex w-[17px] flex-col">
                  <button type="button" aria-label="Nach oben" className={"h-[17px] " + raised}>
                    <Arrow d="M0 7h9L4.500 2z" />
                  </button>
                  <div className={"flex-1 " + raised} />
                  <button type="button" aria-label="Nach unten" className={"h-[17px] " + raised}>
                    <Arrow d="M0 2h9L4.500 7z" />
                  </button>
                </div>
              </div>
            </td>
          </tr>
        </tbody>
      </table>
      <div className="flex h-[17px]">
        <div className="flex w-[341px] shrink-0 border-t border-black pr-px text-[#b4b4b4]">
          <label htmlFor="record" className="w-14 border-r border-black leading-[16px]">
            Datensatz
          </label>
          <input id="record" className="w-[54px] border-r border-black bg-white outline-none" />
          <span className="flex-1 pl-[2px] leading-[16px]">von</span>
          {recordButtons.map((b) => (
            <button type="button" key={b.label} aria-label={b.label} className={"w-[17px] shrink-0 " + raised}>
              <Arrow d={b.d} />
            </button>
          ))}
        </div>
        <button type="button" aria-label="Nach links" className={"w-[17px] shrink-0 " + raised}>
          <Arrow d="M7 0v9L2 4.500z" />
        </button>
        <div className={"flex-1 " + raised} />
        <button type="button" aria-label="Nach rechts" className={"w-[17px] shrink-0 " + raised}>
          <Arrow d="M2 0v9l5-4.500z" />
        </button>
        <div className="w-[17px] shrink-0" />
      </div>
    </div>
  </div>
);

const Canvas = () => (
  <main className="relative min-w-0 flex-1 overflow-hidden bg-[#ffcc99]">
    <svg className="absolute inset-0 h-full w-full" shapeRendering="crispEdges" aria-hidden="true">
      <path d={gridDots} fill="#c3bfba" />
    </svg>
    <div className="relative pl-[38px] pt-[38px]">
      <GridControl />
    </div>
  </main>
);

const Navigator = () => (
  <section className="absolute left-[25px] top-[52px] flex h-[231px] w-[200px] flex-col bg-[#f0f0f0] shadow-[0_4px_16px_rgba(0,0,0,0.45)]">
    <div className="flex h-[31px] items-center justify-between bg-white pl-2 pr-px">
      <h2>Formular Navigator</h2>
      <button type="button" aria-label="Schließen" className="mt-1 flex h-[19px] w-[19px] items-center justify-center bg-[#c75050]">
        <svg width="5" height="5" viewBox="0 0 5 5" aria-hidden="true">
          <path d="M0 0l5 5M5 0L0 5" stroke="#fff" strokeWidth="1.500" />
        </svg>
      </button>
    </div>
    <ul className="mb-[5px] ml-[6px] mr-[5px] mt-[6px] flex-1 border border-[#828790] bg-white" role="tree">
      <li className="flex h-4 items-center pl-[2px]">
        <svg width="17" height="16" viewBox="0 0 17 16" aria-hidden="true">
          <path d="M.5 2.500h2l1-2h3l1 2h4v11H.5z" fill="#f4c860" stroke="#a87410" />
          <path d="M4.500 3.500h12v12h-12z" fill="#f4f6f8" stroke="#52657d" />
          <path d="M4 3h13v3H4z" fill="#2f6bd8" />
          <path d="M7 8v5M7 8.500h2M7 10.500h2M11 9.500h4M11 12.500h4" stroke="#8a93a0" />
        </svg>
        <span className="ml-[3px] border border-dotted border-black leading-[14px]">Formulare</span>
      </li>
      <li className="flex h-4 items-center pl-[5px]">
        <svg width="17" height="16" viewBox="0 0 17 16" fill="none" aria-hidden="true">
          <path d="M.5 3.500h8v8h-8z" stroke="#8a8a8a" />
          <path d="M2 7.500h5" stroke="#2c4b8c" />
          <path d="M10 7.500h7M5.500 0v3" stroke="#e4e4e4" />
        </svg>
        <svg width="14" height="14" viewBox="0 0 14 14" fill="none" className="ml-px" aria-hidden="true">
          <path d="M.5 .5h13v13H.5z" fill="#f4f6f8" stroke="#52657d" />
          <path d="M0 0h14v3.500H0z" fill="#2f6bd8" />
          <path d="M2.500 6v5M2.500 6.500h3M2.500 8.500h2M7 7.500h5M7 10.500h5" stroke="#8a93a0" />
        </svg>
        <span className="ml-[6px]">MainForm</span>
      </li>
      <li className="flex h-4 items-center pl-[30px]">
        <svg width="12" height="16" viewBox="0 0 12 16" fill="none" aria-hidden="true">
          <path d="M.5 0v8.500H12" stroke="#e4e4e4" />
        </svg>
        <svg width="16" height="13" viewBox="0 0 16 13" fill="none" aria-hidden="true">
          <path d="M.5 .5h15v12H.5z" fill="#e8ecf2" stroke="#5a6f8a" />
          <path d="M0 3.500h16M0 6.500h16M0 9.500h16M5.500 0v13M10.500 0v13" stroke="#7d8fa6" />
        </svg>
        <span className="ml-[5px]">MainForm_Grid</span>
      </li>
    </ul>
  </section>
);

const DrawingToolbar = () => (
  <div className="flex h-[39px] items-start overflow-hidden border-t border-[#b0b0b0] pt-px" role="toolbar">
    <Grip />
    <Tool label="Auswahl"><CursorIcon /></Tool>
    <Tool label="Entwurfsmodus an/aus" active><DesignIcon /></Tool>
    <Sep />
    <Tool label="Kontrollfeld"><ControlToolsIcon /></Tool>
    <Tool label="Formular"><FormToolsIcon /></Tool>
    <Sep />
    <Tool label="Formular-Navigator" active><WizardIcon /></Tool>
    <Tool label="Feld hinzufügen"><GridControlIcon /></Tool>
    <Tool label="Aktivierungsreihenfolge"><SwapControlIcon /></Tool>
    <Sep />
    <Tool label="Im Entwurfsmodus öffnen"><OpenDesignIcon /></Tool>
    <Tool label="Automatischer Fokus"><SelectIcon /></Tool>
    <Sep />
    <Tool label="Position und Größe"><PositionIcon /></Tool>
    <Tool label="Verankerung" menu dim><AnchorIcon /></Tool>
    <Sep />
    <Tool label="Ausrichtung" menu dim><ArrangeIcon /></Tool>
    <Sep />
    <Tool label="Raster anzeigen" active><GridDotsIcon /></Tool>
    <Tool label="Am Raster fangen" active><GridDotsIcon magnet /></Tool>
    <Tool label="Fanglinien"><GuidesIcon /></Tool>
    <div className="w-[5px] shrink-0" />
    <Grip />
    <Tool label="Auswahl"><CursorIcon /></Tool>
    <Sep />
    <Tool label="Linie"><LineIcon /></Tool>
    <Tool label="Rechteck"><RectIcon /></Tool>
    <Tool label="Ellipse"><EllipseIcon /></Tool>
    <Tool label="Freihandlinie"><PencilIcon /></Tool>
    <Tool label="Textfeld"><TextIcon /></Tool>
    <Tool label="Legende"><SpeechIcon /></Tool>
    <Sep />
    <Tool label="Standardformen" menu><DiamondIcon /></Tool>
    <Tool label="Symbolformen" menu><SmileyIcon /></Tool>
    <Tool label="Blockpfeile" menu><ArrowsIcon /></Tool>
    <Tool label="Flussdiagramme" menu><FlowIcon /></Tool>
    <Tool label="Legenden" menu><CalloutIcon /></Tool>
    <Tool label="Sterne" menu><StarIcon /></Tool>
    <Sep />
    <Tool label="Punkte"><PointsIcon /></Tool>
    <Sep />
    <Tool label="Fontwork"><FontworkIcon /></Tool>
    <Tool label="Bild aus Datei"><PictureIcon /></Tool>
    <Sep />
    <Tool label="Extrusion"><ExtrudeIcon /></Tool>
  </div>
);

const StatusBar = () => (
  <footer className="flex h-[21px] items-center border-t border-[#a0a0a0]">
    <div className="w-[401px] shrink-0 border-r border-[#a0a0a0] pl-[10px]">Seite 1 von 1</div>
    <div className="w-[380px] shrink-0 border-r border-[#a0a0a0] pl-2">Standard</div>
    <div className="w-[452px] shrink-0 border-r border-[#a0a0a0] text-center">Deutsch (Deutschland)</div>
    <div className="h-4 w-[68px] shrink-0 border-r border-[#a0a0a0]" />
    <div className="flex h-4 w-[29px] shrink-0 items-center justify-center border-r border-[#a0a0a0]">
      <svg width="12" height="12" viewBox="0 0 12 12" fill="none" aria-hidden="true">
        <path d="M0 3h8v6H0z" fill="#8a8a8a" />
        <path d="M9 1.500h3M9 10.500h3M10.500 2v8" stroke="#8a8a8a" />
      </svg>
    </div>
    <div className="flex h-4 w-[29px] shrink-0 items-center justify-center border-r border-[#a0a0a0]">
      <svg width="12" height="12" viewBox="0 0 12 12" fill="none" aria-hidden="true">
        <path d="M9 3V.5H.5v10H9V9" stroke="#8a8a8a" />
        <path d="M9 3.500v5M6.500 4.500l5 3M11.500 4.500l-5 3" stroke="#c0202c" strokeWidth="1.200" />
      </svg>
    </div>
    <div className="h-4 w-[29px] shrink-0 border-r border-[#a0a0a0]" />
    <div className="flex-1" />
    <div className="flex h-4 shrink-0 items-center border-x border-[#a0a0a0] pl-[10px] pr-[6px]">
      <button type="button" aria-label="Verkleinern" className="h-[2px] w-2 bg-[#8a8a8a]" />
      <input
        type="range"
        aria-label="Zoom"
        min={0}
        max={100}
        defaultValue={49}
        className="mx-[6px] h-[2px] w-[98px] appearance-none bg-[#a0a0a0] [&::-webkit-slider-thumb]:h-[10px] [&::-webkit-slider-thumb]:w-2 [&::-webkit-slider-thumb]:appearance-none [&::-webkit-slider-thumb]:rounded-full [&::-webkit-slider-thumb]:border [&::-webkit-slider-thumb]:border-[#8a8a8a] [&::-webkit-slider-thumb]:bg-white"
      />
      <button type="button" aria-label="Vergrößern">
        <svg width="8" height="8" viewBox="0 0 8 8" aria-hidden="true">
          <path d="M3 0h2v3h3v2H5v3H3V5H0V3h3z" fill="#8a8a8a" />
        </svg>
      </button>
    </div>
    <div className="w-[47px] shrink-0 pl-[7px]">100 %</div>
  </footer>
);

export default function App() {
  return (
    <div className="relative flex min-h-screen flex-col overflow-hidden bg-[#f0f0f0] font-['Roboto','Noto_Sans',sans-serif] text-xs text-black">
      <Gradients />
      <TitleBar />
      <div className="border-b border-[#a8a8a8] bg-linear-to-b from-white to-[#efefef]">
        <MenuBar />
        <MainToolbar />
      </div>
      <div className="flex flex-1">
        <ControlBar />
        <StylesPanel />
        <Splitter />
        <div className="flex min-w-0 flex-1 flex-col">
          <HorizontalRuler />
          <div className="flex flex-1">
            <VerticalRuler />
            <Canvas />
          </div>
        </div>
      </div>
      <DrawingToolbar />
      <StatusBar />
      <Navigator />
    </div>
  );
}
